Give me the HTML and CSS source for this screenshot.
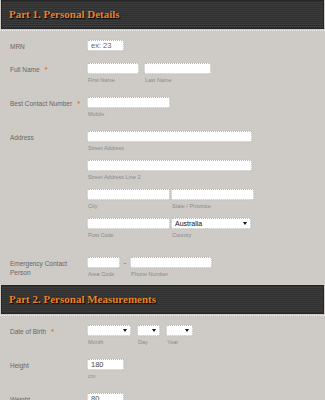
FILE: index.html
```html
<!DOCTYPE html>
<html lang="en">
<head>
  <meta charset="UTF-8">
  <meta name="viewport" content="width=device-width, initial-scale=1.0">
  <title>Patient Form</title>
  <link rel="stylesheet" href="styles.css">
</head>
<body>
  <form class="form">
    <div class="section-head"><h2>Part 1. Personal Details</h2></div>
    <div class="fields">
      <div class="row">
        <label class="label">MRN</label>
        <div class="control">
          <div class="line"><input class="input w-37" type="text" value="ex: 23"></div>
        </div>
      </div>
      <div class="row">
        <label class="label">Full Name<span class="req">*</span></label>
        <div class="control">
          <div class="line gap-5">
            <div class="field"><input class="input w-52" type="text"><span class="sub">First Name</span></div>
            <div class="field"><input class="input w-67" type="text"><span class="sub">Last Name</span></div>
          </div>
        </div>
      </div>
      <div class="row">
        <label class="label">Best Contact Number<span class="req">*</span></label>
        <div class="control">
          <div class="field"><input class="input w-83" type="text"><span class="sub">Mobile</span></div>
        </div>
      </div>
      <div class="row row-address">
        <label class="label">Address</label>
        <div class="control">
          <div class="field"><input class="input w-165" type="text"><span class="sub">Street Address</span></div>
          <div class="field"><input class="input w-165" type="text"><span class="sub">Street Address Line 2</span></div>
          <div class="line gap-1">
            <div class="field"><input class="input w-83" type="text"><span class="sub">City</span></div>
            <div class="field"><input class="input w-83" type="text"><span class="sub">State / Province</span></div>
          </div>
          <div class="line gap-1">
            <div class="field"><input class="input w-83" type="text"><span class="sub">Post Code</span></div>
            <div class="field">
              <span class="select w-80"><select><option>Australia</option></select></span>
              <span class="sub">Country</span>
            </div>
          </div>
        </div>
      </div>
      <div class="row">
        <label class="label">Emergency Contact Person</label>
        <div class="control">
          <div class="line">
            <div class="field"><input class="input w-33" type="text"><span class="sub">Area Code</span></div>
            <span class="dash">-</span>
            <div class="field"><input class="input w-82" type="text"><span class="sub">Phone Number</span></div>
          </div>
        </div>
      </div>
    </div>

    <div class="section-head"><h2>Part 2. Personal Measurements</h2></div>
    <div class="fields">
      <div class="row">
        <label class="label">Date of Birth<span class="req">*</span></label>
        <div class="control">
          <div class="line gap-6">
            <div class="field"><span class="select w-44"><select><option></option></select></span><span class="sub">Month</span></div>
            <div class="field"><span class="select w-23"><select><option></option></select></span><span class="sub">Day</span></div>
            <div class="field"><span class="select w-27"><select><option></option></select></span><span class="sub">Year</span></div>
          </div>
        </div>
      </div>
      <div class="row">
        <label class="label">Height</label>
        <div class="control">
          <div class="field"><input class="input w-37 dark" type="text" value="180"><span class="sub">cm</span></div>
        </div>
      </div>
      <div class="row">
        <label class="label">Weight</label>
        <div class="control">
          <div class="field"><input class="input w-37 dark" type="text" value="80"><span class="sub">kg</span></div>
        </div>
      </div>
    </div>
  </form>
</body>
</html>
```

FILE: styles.css
```css
body {
  margin: 0;
  background-color: #cecbc6;
  font-family: "Liberation Sans", Arial, sans-serif;
}
.form {
  margin: 0;
}
.section-head {
  padding-bottom: 1px;
  border-bottom: 1px dotted rgba(255, 255, 255, 0.7);
}
.section-head h2 {
  margin: 0 1px;
  height: 29px;
  box-sizing: border-box;
  border: 1px solid #262626;
  padding-left: 7px;
  background-color: #3b3b3b;
  background-image: repeating-linear-gradient(0deg, rgba(0, 0, 0, 0.18) 0 1px, transparent 1px 2px);
  font-family: "Liberation Serif", Georgia, serif;
  font-size: 11px;
  font-weight: bold;
  line-height: 27px;
  color: #e8842c;
  text-shadow: 1px 1px 1px #000;
}
.fields {
  padding: 9px 0 0 10px;
}
.row {
  display: flex;
  padding-bottom: 12px;
}
.row-address {
  padding-bottom: 17px;
}
.fields .row:last-child {
  padding-bottom: 6px;
}
.label {
  width: 77px;
  flex: none;
  padding-top: 2px;
  padding-right: 2px;
  box-sizing: border-box;
  font-size: 6.5px;
  line-height: 9px;
  color: #666;
}
.req {
  margin-left: 5px;
  color: #e8701a;
  font-weight: bold;
  font-size: 7px;
}
.control {
  display: flex;
  flex-direction: column;
  gap: 7px;
}
.line {
  display: flex;
  align-items: flex-start;
}
.gap-1 { gap: 1px; }
.gap-5 { gap: 5px; }
.gap-6 { gap: 6px; }
.field {
  display: flex;
  flex-direction: column;
}
.input {
  display: block;
  height: 11px;
  box-sizing: border-box;
  margin: 0;
  padding: 0 3px;
  border: 1px dotted #b8b6b2;
  border-radius: 2px;
  background: #fff;
  box-shadow: 0 0 1px rgba(0, 0, 0, 0.15);
  font-family: "Liberation Sans", Arial, sans-serif;
  font-size: 7.5px;
  color: #666;
  outline: none;
}
.input.dark {
  color: #444;
}
.sub {
  margin-top: 1px;
  padding-left: 1px;
  font-size: 5.5px;
  line-height: 10px;
  color: #8a8a8a;
}
.dash {
  width: 10px;
  text-align: center;
  font-size: 7px;
  line-height: 11px;
  color: #555;
}
.select {
  position: relative;
  display: block;
  height: 11px;
  font-size: 0;
}
.select select {
  display: block;
  appearance: none;
  -webkit-appearance: none;
  width: 100%;
  height: 11px;
  box-sizing: border-box;
  margin: 0;
  padding: 0 3px;
  border: 1px dotted #b8b6b2;
  border-radius: 2px;
  background: #fff;
  box-shadow: 0 0 1px rgba(0, 0, 0, 0.15);
  font-family: "Liberation Sans", Arial, sans-serif;
  font-size: 7px;
  color: #111;
}
.select::after {
  content: "";
  position: absolute;
  right: 4px;
  top: 4px;
  border-left: 2px solid transparent;
  border-right: 2px solid transparent;
  border-top: 3px solid #111;
  pointer-events: none;
}
.w-23 { width: 23px; }
.w-27 { width: 27px; }
.w-33 { width: 33px; }
.w-37 { width: 37px; }
.w-44 { width: 44px; }
.w-52 { width: 52px; }
.w-67 { width: 67px; }
.w-80 { width: 80px; }
.w-82 { width: 82px; }
.w-83 { width: 83px; }
.w-165 { width: 165px; }
```
